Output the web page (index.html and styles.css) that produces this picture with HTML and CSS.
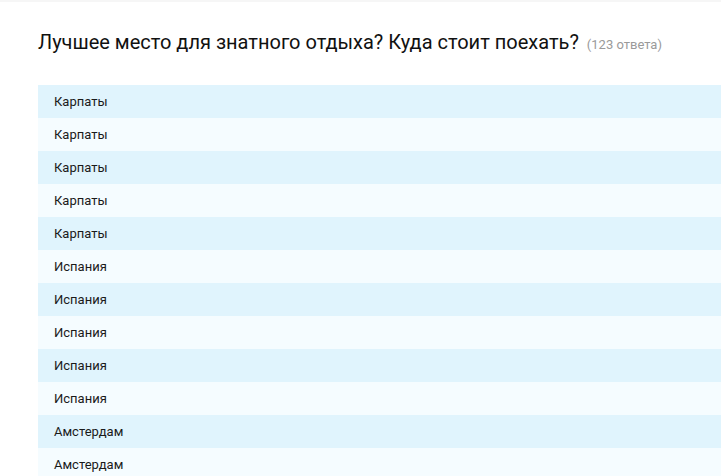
FILE: index.html
```html
<!DOCTYPE html>
<html lang="ru">
<head>
<meta charset="utf-8">
<link rel="stylesheet" href="styles.css">
</head>
<body>
<div class="topline"></div>
<main class="poll">
  <h1 class="title">Лучшее место для знатного отдыха? Куда стоит поехать? <span class="count">(123 ответа)</span></h1>
  <ul class="answers">
    <li class="row">Карпаты</li>
    <li class="row">Карпаты</li>
    <li class="row">Карпаты</li>
    <li class="row">Карпаты</li>
    <li class="row">Карпаты</li>
    <li class="row">Испания</li>
    <li class="row">Испания</li>
    <li class="row">Испания</li>
    <li class="row">Испания</li>
    <li class="row">Испания</li>
    <li class="row">Амстердам</li>
    <li class="row">Амстердам</li>
  </ul>
</main>
</body>
</html>
```
FILE: styles.css
```css
html, body {
  margin: 0;
  padding: 0;
  background: #ffffff;
  font-family: Roboto, "Noto Sans", sans-serif;
  color: #111;
  overflow: hidden;
}
.topline {
  height: 2px;
  background: #f6f6f6;
}
.poll {
  padding: 0 0 0 38px;
}
.title {
  margin: 0 0 27px;
  padding-top: 27px;
  font-size: 20px;
  font-weight: 400;
  line-height: 26px;
  color: #111;
}
.count {
  font-size: 13px;
  color: #9a9a9a;
  margin-left: 3px;
}
.answers {
  list-style: none;
  margin: 0;
  padding: 0;
}
.row {
  height: 33px;
  line-height: 33px;
  padding-left: 16px;
  font-size: 13px;
  color: #1a1a1a;
  background: #f5fcff;
}
.row:nth-child(odd) {
  background: #e0f4fd;
}
```
